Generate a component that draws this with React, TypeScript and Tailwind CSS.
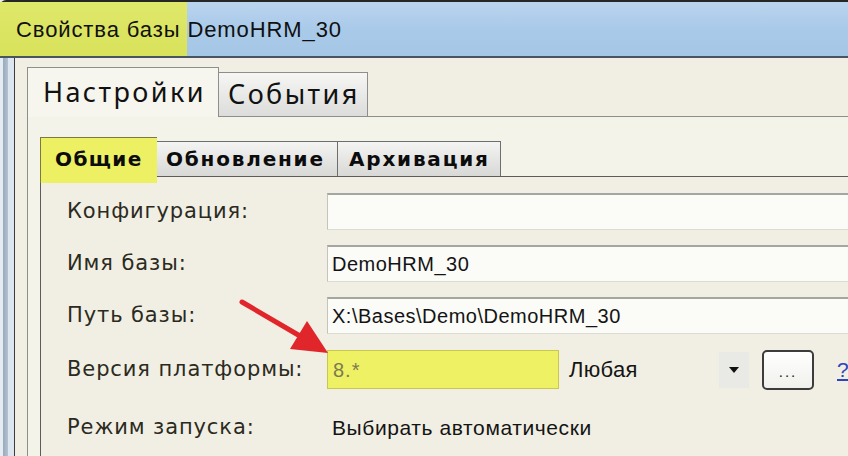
import React from "react";

const labelFont = { fontFamily: '"DejaVu Sans", Verdana, sans-serif' };
const uiFont = { fontFamily: '"Liberation Sans", Arial, sans-serif' };

function Field({ children, className = "" }: { children?: React.ReactNode; className?: string }) {
  return (
    <div
      className={`h-full flex items-center pl-[4px] bg-[#fbfbf8] border-t-2 border-l border-b border-t-[#a6a6a0] border-l-[#c4c4bc] border-b-[#dcdcd2] text-[20px] tracking-[0.5px] text-[#141414] ${className}`}
      style={uiFont}
    >
      {children}
    </div>
  );
}

function Label({ children }: { children: React.ReactNode }) {
  return (
    <div className="flex items-center text-[21px] tracking-[0.9px] text-[#2b2a1e]" style={labelFont}>
      {children}
    </div>
  );
}

export default function App() {
  return (
    <div className="w-[848px] h-[456px] overflow-hidden flex flex-col bg-[#f0eee2] relative">
      {/* Title bar */}
      <div className="h-[58px] shrink-0 flex border-t-2 border-[#262626] border-b-2 border-b-[#4a5460] bg-gradient-to-b from-[#b9d4ee] via-[#aacaea] to-[#a6c6e6] rounded-tl-[6px]">
        <div className="flex items-center text-[22px] tracking-[0.9px] text-[#101010]" style={uiFont}>
          <span className="h-full flex items-center pl-[16px] pr-[7px] bg-gradient-to-b from-[#dfe86a] to-[#d8e25a]">Свойства базы</span>
          <span>DemoHRM_30</span>
        </div>
      </div>

      {/* Body */}
      <div className="flex flex-1 min-h-0">
        {/* window frame */}
        <div className="w-[14px] shrink-0 flex">
          <div className="w-[3px] bg-[#e4ecf4]" />
          <div className="w-[5px] bg-gradient-to-r from-[#9aaabb] to-[#b4c2d0]" />
          <div className="w-[6px] bg-[#dce6f0]" />
        </div>
        <div className="flex-1 min-w-0 border-l border-[#3c3c3c] bg-[#f1efe4] pl-[12px] pt-[8px] flex flex-col">
          {/* Outer tabs */}
          <div className="flex items-end h-[50px] shrink-0">
            <div
              className="h-[50px] w-[192px] relative z-10 -mb-px border-l border-t border-r border-[#8e8e8a] bg-[#f6f5ee] flex items-center pl-[15px] text-[27px] tracking-[2.4px] text-[#111]"
              style={{ fontFamily: '"Noto Sans", "Open Sans", sans-serif' }}
            >
              Настройки
            </div>
            <div
              className="h-[44px] w-[149px] border-t border-r border-[#8e8e8a] bg-gradient-to-b from-[#f6f6f4] to-[#dcdcda] flex items-center pl-[9px] text-[27px] tracking-[2.4px] text-[#111]"
              style={{ fontFamily: '"Noto Sans", "Open Sans", sans-serif' }}
            >
              События
            </div>
          </div>

          {/* Outer pane */}
          <div className="flex-1 border-l border-t border-[#8e8e8a] bg-[#f4f3ea] pl-[12px] pt-[20px] flex flex-col">
            {/* Inner tabs */}
            <div className="flex items-start h-[39px] shrink-0 text-[20px] tracking-[1.8px] font-bold text-[#0c0c0c]" style={labelFont}>
              <div className="h-[46px] w-[117px] relative z-10 bg-[#eef063] border-l border-t border-[#7a7a40] flex items-start pt-[6px] pl-[14px] tracking-[1.4px]">
                Общие
              </div>
              <div className="mt-[4px] h-[35px] w-[181px] border-t border-r border-[#6e6e6e] bg-gradient-to-b from-[#f4f4f2] to-[#d8d8d6] flex items-center pl-[9px]">
                Обновление
              </div>
              <div className="mt-[4px] h-[35px] w-[163px] border-t border-r border-[#6e6e6e] bg-gradient-to-b from-[#f4f4f2] to-[#d8d8d6] flex items-center pl-[11px]">
                Архивация
              </div>
            </div>

            {/* Inner pane */}
            <div className="flex-1 border-l border-t border-[#5c5c5c] bg-[#f1efe3] pt-[16px] pl-[26px]">
              <div className="grid grid-cols-[260px_1fr] gap-y-[15px]">
                <Label>Конфигурация:</Label>
                <div className="h-[37px]"><Field /></div>
                <Label>Имя базы:</Label>
                <div className="h-[37px]"><Field>DemoHRM_30</Field></div>
                <Label>Путь базы:</Label>
                <div className="h-[37px]"><Field>X:\Bases\Demo\DemoHRM_30</Field></div>
                <div className="h-[39px] mt-[1px] flex items-center">
                  <Label>Версия платформы:</Label>
                </div>
                <div className="h-[39px] mt-[1px] flex items-center">
                  <div
                    className="h-[39px] w-[232px] shrink-0 bg-[#eff164] border border-[#c8c850] flex items-center pl-[5px] text-[20px] text-[#7d7a52] tracking-[1px]"
                    style={uiFont}
                  >
                    8.*
                  </div>
                  <div className="w-[160px] shrink-0 pl-[10px] text-[22px] tracking-[0.3px] text-[#141414]" style={uiFont}>
                    Любая
                  </div>
                  <div className="w-[30px] h-[36px] shrink-0 bg-[#e9e9e5] flex items-center justify-center">
                    <svg width="10" height="6" viewBox="0 0 10 6">
                      <path d="M0 0 L10 0 L5 6 Z" fill="#111" />
                    </svg>
                  </div>
                  <div className="ml-[13px] w-[52px] h-[40px] shrink-0 rounded-[5px] border-2 border-[#3c3c3c] bg-gradient-to-b from-[#ffffff] to-[#f0f0ec] flex items-end justify-center pb-[9px]">
                    <span className="text-[15px] leading-none tracking-[2px] text-[#222]" style={uiFont}>...</span>
                  </div>
                  <div className="ml-[23px] text-[21px] text-[#2c44c0] underline" style={uiFont}>?</div>
                </div>
                <div className="h-[37px] mt-[5px] flex items-center">
                  <Label>Режим запуска:</Label>
                </div>
                <div className="h-[37px] mt-[5px] flex items-center pl-[5px] text-[21px] tracking-[0.6px] text-[#141414]" style={uiFont}>
                  Выбирать автоматически
                </div>
              </div>
            </div>
          </div>
        </div>
      </div>

      {/* Annotation arrow */}
      <svg className="absolute left-0 top-0 pointer-events-none" width="848" height="456" viewBox="0 0 848 456">
        <line x1="242" y1="302" x2="300" y2="336" stroke="#e0262a" strokeWidth="5" strokeLinecap="round" />
        <path d="M307 321 L290 349 L328 353 Z" fill="#e0262a" />
      </svg>
    </div>
  );
}
